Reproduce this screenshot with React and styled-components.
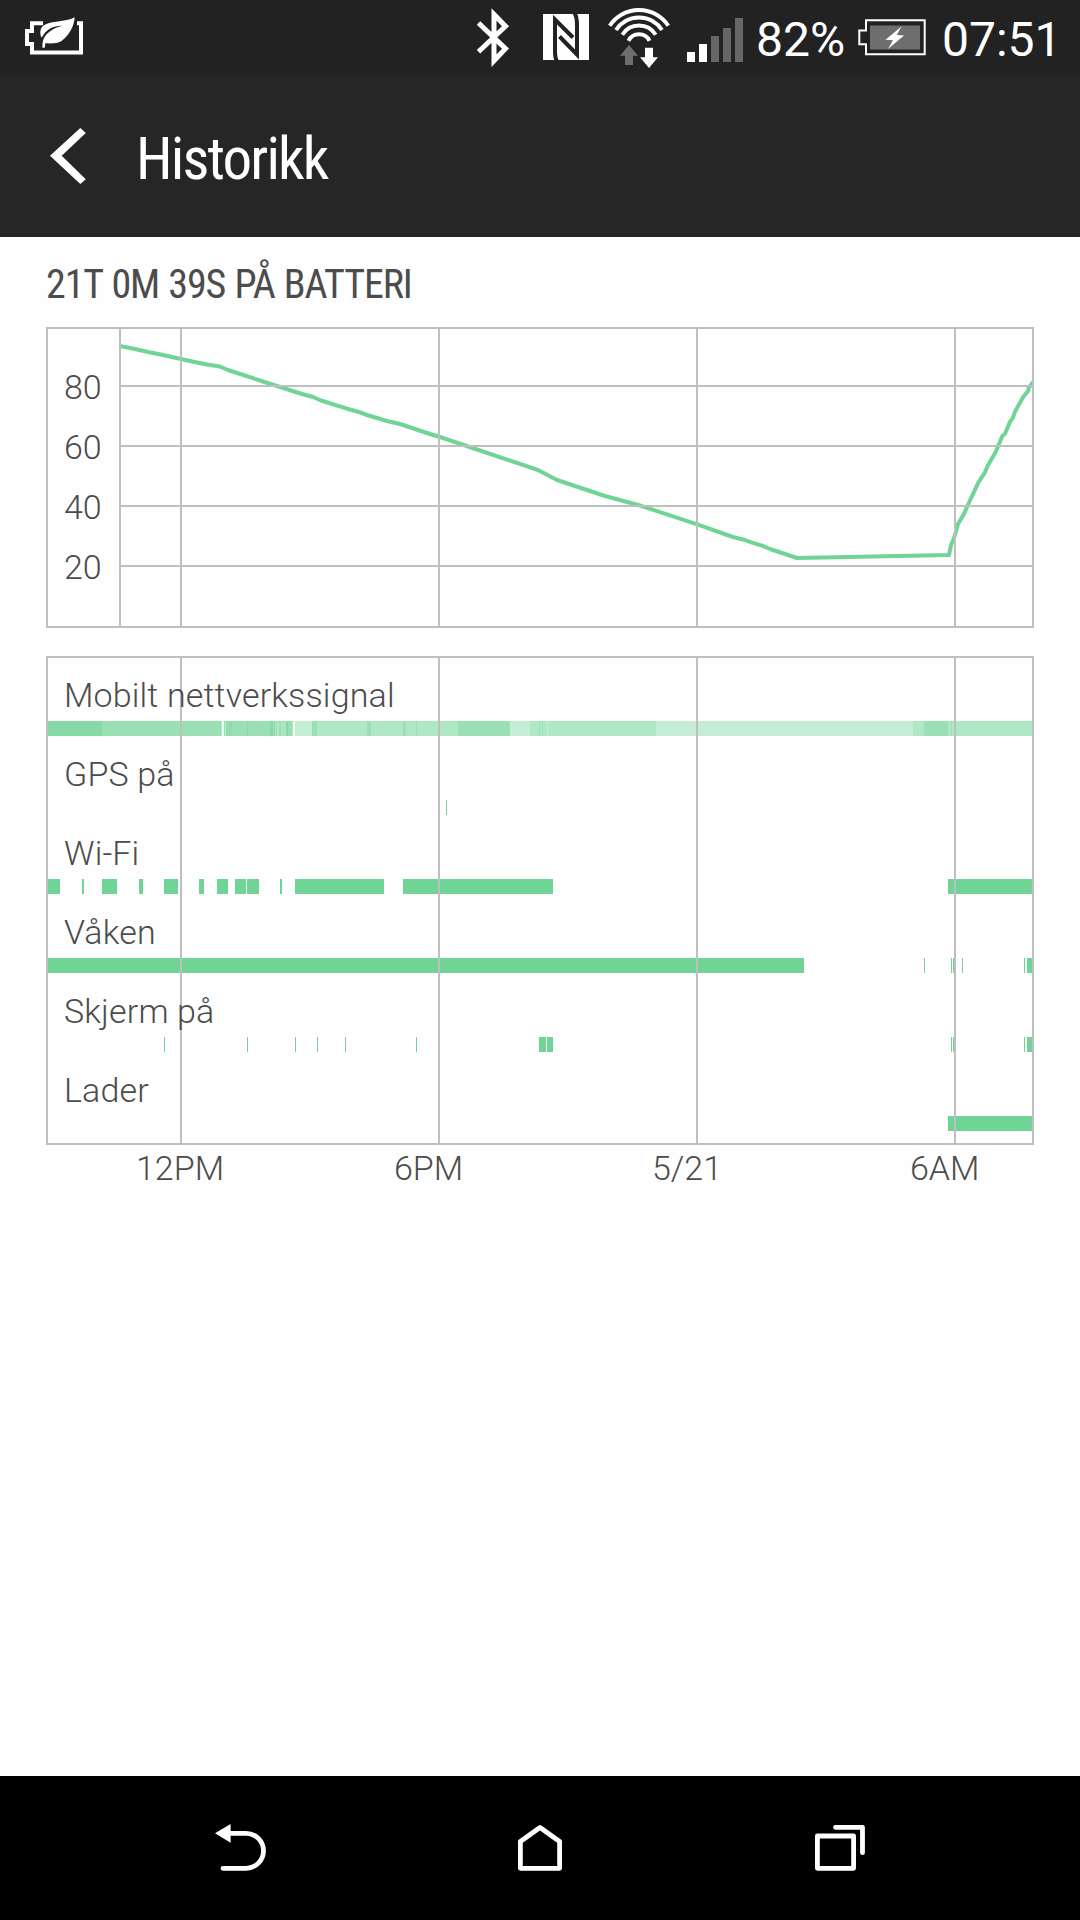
import React from "react";
import styled, { createGlobalStyle } from "styled-components";

const Global = createGlobalStyle`
  body { margin: 0; background: #fefefe; }
  * { box-sizing: border-box; }
`;

const GREEN = "#6fd495";
const RULE = "#bfbfbf";

const Screen = styled.div`
  width: 1080px;
  height: 1920px;
  display: flex;
  flex-direction: column;
  background: #fefefe;
  color: #4c4c4c;
  font-family: Roboto, "Liberation Sans", sans-serif;
  overflow: hidden;
`;

const StatusBar = styled.header`
  height: 75px;
  flex: none;
  display: flex;
  background: #222;
  color: #fff;
`;

const StatusText = styled.span`
  width: ${(p) => p.$width}px;
  font-size: 48px;
  line-height: 79px;
  font-weight: 400;
  white-space: nowrap;
`;

const Glyph = styled.svg`
  display: block;
  flex: none;
`;

const TitleBar = styled.div`
  height: 162px;
  flex: none;
  display: flex;
  background: #262626;
  color: #fff;
`;

const Title = styled.h1`
  margin: 0;
  font: 400 59px/167px "Roboto Condensed", Roboto, sans-serif;
  font-stretch: 75%;
  letter-spacing: -1.85px;
`;

const Content = styled.main`
  flex: 1;
  padding: 0 46px;
`;

const Heading = styled.h2`
  margin: 0;
  height: 90px;
  font: 400 40px/96px "Roboto Condensed", Roboto, sans-serif;
  font-stretch: 75%;
  letter-spacing: -1.08px;
  word-spacing: 1px;
  white-space: nowrap;
`;

const LevelPanel = styled.section`
  display: flex;
  height: 301px;
  border: 2px solid ${RULE};
`;

const Scale = styled.div`
  width: 71px;
  padding: 25px 0 0 16px;
  display: flex;
  flex-direction: column;
`;

const Tick = styled.span`
  height: 60px;
  font-size: 34px;
  line-height: 66px;
  font-weight: 300;
`;

const Timeline = styled.section`
  position: relative;
  height: 489px;
  margin-top: 28px;
  padding-top: 15px;
  border: 2px solid ${RULE};
`;

const Row = styled.div`
  height: 79px;
  display: flex;
  flex-direction: column;
`;

const Label = styled.span`
  position: relative;
  z-index: 1;
  height: 48px;
  padding-left: 16px;
  font-size: 34px;
  line-height: 44px;
  font-weight: 300;
  letter-spacing: 0.15px;
  white-space: nowrap;
`;

const Rule = styled.i`
  position: absolute;
  top: 0;
  bottom: 0;
  left: ${(p) => p.$x - 48}px;
  width: 2px;
  background: ${RULE};
`;

const Hours = styled.footer`
  display: flex;
  padding-left: 90px;
  font-size: 34px;
  line-height: 46px;
  font-weight: 300;
`;

const Hour = styled.span`
  width: ${(p) => p.$width}px;
`;

const NavBar = styled.nav`
  height: 144px;
  flex: none;
  display: flex;
  justify-content: space-between;
  padding: 0 215px;
  background: #000;
`;

const hours = [180, 438, 696, 954];
const levels = [80, 60, 40, 20];

const level = [
  [120, 346], [135, 349], [148, 352], [163, 355], [181, 359], [197, 362.5], [207, 364.5], [220, 366.5],
  [228, 370], [263, 381.5], [277, 386], [302, 394], [313, 397], [321, 400.5], [347, 408.7], [358, 411.7],
  [367, 415], [387, 421], [400, 424], [430, 434], [440, 437], [538, 470], [557, 480], [605, 496],
  [640, 505.5], [698, 524.7], [733, 537], [745, 540], [752, 542.7], [762, 545.7], [770, 549],
  [797, 558], [949, 555], [951, 545], [954, 538.3], [958, 524], [961, 519], [964, 514],
  [968.3, 504], [978.3, 482.7], [985, 472.3], [987.7, 465.7], [995, 453.3], [1000, 441.7],
  [1002.3, 436], [1005, 433.7], [1010, 421.7], [1012.7, 418.3], [1015, 411.7], [1023.3, 396.7],
  [1028.3, 390.7], [1028.7, 388], [1034, 381],
];

const A = "#85daa5";
const B = "#9ae0b4";
const C = "#afe8c4";
const D = "#c5edd4";
const W = "#f1fbf4";

const rows = [
  ["Mobilt nettverkssignal", [
    [48, 102, A], [102, 221, B], [221, 222, C], [222, 224, W], [224, 270, B], [225, 226, C], [227, 228, A],
    [229, 230, A], [231, 232, A], [247, 248, A], [270, 273, A], [273, 274, B], [274, 275, A], [275, 276, C],
    [276, 277, B], [277, 279, C], [279, 281, B], [281, 283, C], [283, 284, B], [284, 286, C], [286, 288, A],
    [288, 292, B], [292, 293, C], [293, 295, W], [295, 312, D], [312, 317, B], [317, 367, C], [367, 371, B],
    [371, 403, C], [403, 406, B], [406, 416, C], [416, 417, B], [417, 458, C], [458, 510, B], [510, 530, D],
    [530, 539, C], [539, 540, B], [540, 542, C], [542, 543, B], [543, 547, C], [547, 548, D], [548, 656, C],
    [656, 913, D], [913, 924, C], [924, 948, B], [948, 951, C], [951, 952, B], [952, 953, C], [953, 1032, C],
  ]],
  ["GPS på", [[446, 447]]],
  ["Wi-Fi", [
    [48, 60], [82, 84], [102, 117], [139, 143], [164, 178], [199, 204], [217, 228], [235, 246], [247, 259],
    [280, 282], [295, 384], [403, 553], [948, 1032],
  ]],
  ["Våken", [[48, 804], [924, 925], [951, 952], [953, 955], [962, 963], [1024, 1025], [1027, 1032]]],
  ["Skjerm på", [
    [164, 165], [247, 248], [295, 296], [317, 318], [345, 346], [416, 417], [539, 546], [547, 553],
    [951, 952], [953, 955], [1024, 1025], [1027, 1032],
  ]],
  ["Lader", [[948, 1032]]],
];

function Track({ spans }) {
  return (
    <Glyph width="984" height="15" viewBox="48 0 984 15" shapeRendering="crispEdges">
      {spans.map(([from, to, color = GREEN], i) => (
        <rect key={i} x={from} y="0" width={to - from} height="15" fill={color} />
      ))}
    </Glyph>
  );
}

function PowerSaver() {
  return (
    <Glyph width="470" height="75" viewBox="0 0 470 75" fill="none">
      <path d="M43 23.2H32V31H27V44H32V52.5H81V23.2H77" stroke="#fff" strokeWidth="4" />
      <path d="M74.7 17.2C74 27 69 35 61.5 41C57 44 50 43.5 45.3 43.3L44.8 47.8H42.4C42 42 43.5 37.5 46.5 34.3C51 29.5 56.5 27 62.4 25.7C54 25.5 46 29 41.6 37.8C39.6 33.5 39.8 28.5 43.5 25.5C50.5 20.3 65 22.5 74.7 17.2Z" fill="#fff" />
    </Glyph>
  );
}

function Connectivity() {
  return (
    <Glyph width="286" height="75" viewBox="470 0 286 75" fill="none">
      <path d="M478.5 23L505.5 48.7L494 60.8V14.5L505.5 26.3L478.5 51.8" stroke="#fff" strokeWidth="5" />
      <path d="M543 14H589V60H543Z" fill="#fff" />
      <path d="M557 61C554.5 58 555 52 555 47V19.5L573 37.5" stroke="#222" strokeWidth="4" />
      <path d="M574.5 13C577.3 17 577 22 577 27V54.5L559.5 36.5" stroke="#222" strokeWidth="4" />
      <g stroke="#fff" strokeWidth="3.9">
        <path d="M609.7 25.8A35 35 0 0 1 668.3 25.8" />
        <path d="M616 30A27.4 27.4 0 0 1 662 30" />
        <path d="M622.3 34.8A19.7 19.7 0 0 1 655.7 34.8" />
        <path d="M628.5 40.8A11.7 11.7 0 0 1 649.5 40.8" />
      </g>
      <path d="M629 45L638 55.7H633V65H625V55.7H620Z" fill="#6e6e6e" />
      <path d="M645 47.7H653V57.3H658L649 68L640 57.3H645Z" fill="#fff" />
      <path d="M687 52H695V62H687ZM699 44H707V62H699Z" fill="#fff" />
      <path d="M711 36H719V62H711ZM723 28H731V62H723ZM735 18H743V62H735Z" fill="#666" />
    </Glyph>
  );
}

function Charging() {
  return (
    <Glyph width="86" height="75" viewBox="856 0 86 75" fill="none">
      <path d="M866 20.3H924.7V54.3H866V44.3H859.3V30.5H866Z" stroke="#fff" strokeWidth="2" />
      <path d="M870 25.5H920V49.5H870Z" fill="#6e6e6e" />
      <path d="M901.5 26.5L885.5 39.7L893 40.2L888 49L904 35.5L896.7 35Z" fill="#fff" />
    </Glyph>
  );
}

export default function App() {
  return (
    <Screen>
      <Global />
      <StatusBar>
        <PowerSaver />
        <Connectivity />
        <StatusText $width={100}>82%</StatusText>
        <Charging />
        <StatusText $width={138}>07:51</StatusText>
      </StatusBar>
      <TitleBar>
        <Glyph width="136" height="162" viewBox="0 75 136 162">
          <path d="M80.3 128L50 155.7L80.3 184L85.8 179.2L61.7 155.7L85.8 133Z" fill="#fff" />
        </Glyph>
        <Title>Historikk</Title>
      </TitleBar>
      <Content>
        <Heading>21T 0M 39S PÅ BATTERI</Heading>
        <LevelPanel>
          <Scale>
            {levels.map((n) => <Tick key={n}>{n}</Tick>)}
          </Scale>
          <Glyph width="913" height="297" viewBox="119 329 913 297">
            <polyline points={level.join(" ")} fill="none" stroke={GREEN} strokeWidth="4" strokeLinejoin="round" />
            <path d="M120 329V626M181 329V626M439 329V626M697 329V626M955 329V626M120 386H1032M120 446H1032M120 506H1032M120 566H1032" stroke={RULE} strokeWidth="2" />
          </Glyph>
        </LevelPanel>
        <Timeline>
          {rows.map(([name, spans]) => (
            <Row key={name}>
              <Label>{name}</Label>
              <Track spans={spans} />
            </Row>
          ))}
          {hours.map((x) => <Rule key={x} $x={x} />)}
        </Timeline>
        <Hours>
          <Hour $width={258}>12PM</Hour>
          <Hour $width={258}>6PM</Hour>
          <Hour $width={258}>5/21</Hour>
          <Hour>6AM</Hour>
        </Hours>
      </Content>
      <NavBar>
        <Glyph width="52" height="144" viewBox="215 1776 52 144" fill="none">
          <path d="M228 1833.3H246A17.5 17.5 0 0 1 246 1868.3H223" stroke="#fff" strokeWidth="4.8" strokeLinecap="round" />
          <path d="M215 1833.3L230.6 1824V1842.7Z" fill="#fff" />
        </Glyph>
        <Glyph width="46" height="144" viewBox="518 1776 46 144" fill="none">
          <path d="M520.4 1868.3V1841.5L540 1827.5L559.6 1841.5V1868.3Z" stroke="#fff" strokeWidth="4.8" strokeLinejoin="round" />
        </Glyph>
        <Glyph width="50" height="144" viewBox="815 1776 50 144" fill="none">
          <path d="M817.4 1836H853.6V1868.3H817.4ZM835.5 1827.3H862.5V1852.7" stroke="#fff" strokeWidth="4.8" strokeLinejoin="round" strokeLinecap="round" />
        </Glyph>
      </NavBar>
    </Screen>
  );
}
